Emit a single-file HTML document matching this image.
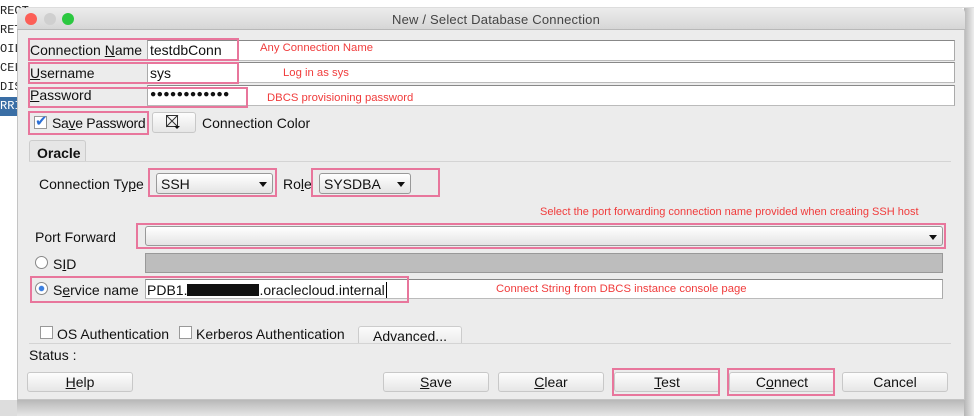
<!DOCTYPE html>
<html><head><meta charset="utf-8"><style>
*{margin:0;padding:0;box-sizing:border-box}
body{width:974px;height:416px;overflow:hidden;background:#fff;font-family:"Liberation Sans","DejaVu Sans",sans-serif;position:relative;font-size:14px;color:#111}
.a{position:absolute}
.pk{position:absolute;border:2px solid #e8769c}
.fld{position:absolute;background:#fff;border-top:1px solid #888;border-bottom:1px solid #bbb;border-left:1px solid #aaa;border-right:1px solid #aaa}
.red{position:absolute;color:#f03c3c;font-size:11.3px}
.btn{position:absolute;height:20px;border:1px solid #c8c8c8;border-radius:3px;background:linear-gradient(#fdfdfd,#e6e6e6);text-align:center;font-size:14px;line-height:19px}
.combo{position:absolute;border:1px solid #999;border-radius:3px;background:linear-gradient(#fff,#e4e4e4);font-size:14px;line-height:20px;padding-left:4px}
.arr{position:absolute;right:5px;top:8px;width:0;height:0;border-left:4px solid transparent;border-right:4px solid transparent;border-top:5px solid #111}
.cb{position:absolute;width:13px;height:13px;border:1px solid #999;background:#fff}
u{text-decoration:underline}
</style></head><body>
<div class="a" style="left:0;top:0;width:974px;height:8px;background:#fff;border-bottom:1px solid #ddd"></div>
<div class="a" style="left:0;top:0;width:17px;height:416px;background:#fff;font-family:'Liberation Mono',monospace;font-size:12px;line-height:19px;color:#222;padding-top:2px">
<div>RECT</div><div>RET</div><div>OILT</div><div>CELI</div><div>DIST</div><div style="background:#3a6ea5;color:#fff">RRIC</div></div>
<div class="a" style="left:17px;top:400px;width:957px;height:16px;background:linear-gradient(#b8b8b8,#e6e6e6)"></div>
<div class="a" style="left:0;top:400px;width:17px;height:16px;background:#ddd"></div>
<div class="a" style="left:964px;top:8px;width:10px;height:408px;background:linear-gradient(90deg,#b5b5b5,#eee)"></div>
<div class="a" style="left:17px;top:8px;width:948px;height:392px;background:#ececec;border-radius:5px 5px 0 0;border:1px solid #c4c4c4"></div>
<div class="a" style="left:17px;top:8px;width:948px;height:22px;background:linear-gradient(#ececec,#d6d6d6);border-radius:5px 5px 0 0;border-bottom:1px solid #b8b8b8"></div>
<div class="a" style="left:25px;top:13px;width:12px;height:12px;border-radius:50%;background:#fc5f57"></div>
<div class="a" style="left:44px;top:13px;width:12px;height:12px;border-radius:50%;background:#cfcfcf"></div>
<div class="a" style="left:62px;top:13px;width:12px;height:12px;border-radius:50%;background:#2bc840"></div>
<div class="a" style="left:392px;top:12px;font-size:13px;color:#444;letter-spacing:0.2px">New / Select Database Connection</div>

<div class="fld" style="left:147px;top:40px;width:808px;height:21px"></div>
<div class="fld" style="left:147px;top:62px;width:808px;height:21px"></div>
<div class="fld" style="left:147px;top:85px;width:808px;height:21px"></div>
<div class="a" style="left:30px;top:42px">Connection <u>N</u>ame</div>
<div class="a" style="left:150px;top:42px">testdbConn</div>
<div class="a" style="left:30px;top:65px"><u>U</u>sername</div>
<div class="a" style="left:150px;top:65px">sys</div>
<div class="a" style="left:30px;top:87px"><u>P</u>assword</div>
<div class="a" style="left:150px;top:88px;font-size:10.5px;letter-spacing:0.3px">●●●●●●●●●●●●</div>
<div class="pk" style="left:28px;top:38px;width:211px;height:23px"></div>
<div class="pk" style="left:28px;top:62px;width:211px;height:22px"></div>
<div class="pk" style="left:28px;top:87px;width:220px;height:21px"></div>
<div class="red" style="left:260px;top:42px">Any Connection Name</div>
<div class="red" style="left:283px;top:67px">Log in as sys</div>
<div class="red" style="left:267px;top:92px">DBCS provisioning password</div>

<div class="cb" style="left:34px;top:116px"></div>
<div class="a" style="left:35px;top:112px;color:#2a6fd6;font-size:15px">✔</div>
<div class="a" style="left:52px;top:115px;letter-spacing:-0.3px">Sa<u>v</u>e Password</div>
<div class="pk" style="left:28px;top:111px;width:121px;height:24px"></div>
<div class="btn" style="left:152px;top:112px;width:44px;height:21px"></div>
<svg class="a" style="left:166px;top:115px" width="16" height="16"><rect x="0.5" y="0.5" width="11" height="11" fill="none" stroke="#333"/><path d="M0 0L12 12M12 0L0 12" stroke="#333" stroke-width="1"/><path d="M8 11h6l-3 3z" fill="#111"/></svg>
<div class="a" style="left:202px;top:115px">Connection Color</div>

<div class="a" style="left:29px;top:140px;width:57px;height:22px;border:1px solid #ccc;border-bottom:none;border-radius:3px 3px 0 0;background:#e6e6e6;font-weight:bold;padding:4px 0 0 7px">Oracle</div>
<div class="a" style="left:29px;top:161px;width:922px;height:183px;border-top:1px solid #d4d4d4;border-bottom:1px solid #d4d4d4;background:#ececec"></div>

<div class="a" style="left:39px;top:176px">Connection Ty<u>p</u>e</div>
<div class="combo" style="left:156px;top:173px;width:117px;height:21px">SSH<div class="arr"></div></div>
<div class="pk" style="left:148px;top:168px;width:129px;height:29px"></div>
<div class="a" style="left:283px;top:176px">Ro<u>l</u>e</div>
<div class="combo" style="left:319px;top:173px;width:92px;height:21px">SYSDBA<div class="arr"></div></div>
<div class="pk" style="left:311px;top:168px;width:129px;height:29px"></div>

<div class="red" style="left:540px;top:206px;font-size:11px">Select the port forwarding connection name provided when creating SSH host</div>
<div class="a" style="left:35px;top:229px">Port Forward</div>
<div class="combo" style="left:145px;top:226px;width:798px;height:20px"><div class="arr"></div></div>
<div class="pk" style="left:136px;top:223px;width:810px;height:26px"></div>

<div class="a" style="left:35px;top:256px;width:13px;height:13px;border-radius:50%;border:1px solid #888;background:#fff"></div>
<div class="a" style="left:53px;top:256px">S<u>I</u>D</div>
<div class="a" style="left:145px;top:253px;width:798px;height:20px;background:#bdbdbd;border:1px solid #999"></div>

<div class="a" style="left:35px;top:282px;width:13px;height:13px;border-radius:50%;border:1px solid #888;background:radial-gradient(#3b7fe0 30%,#fff 40%)"></div>
<div class="a" style="left:53px;top:282px">S<u>e</u>rvice name</div>
<div class="fld" style="left:145px;top:279px;width:798px;height:20px"></div>
<div class="a" style="left:147px;top:282px">PDB1.<span style="display:inline-block;width:72px;height:12px;background:#111;vertical-align:-1px"></span>.oraclecloud.internal<span style="border-left:1px solid #000;margin-left:1px"></span></div>
<div class="pk" style="left:30px;top:276px;width:379px;height:27px"></div>
<div class="red" style="left:496px;top:283px">Connect String from DBCS instance console page</div>

<div class="cb" style="left:40px;top:326px"></div>
<div class="a" style="left:57px;top:326px">OS Authentication</div>
<div class="cb" style="left:179px;top:326px"></div>
<div class="a" style="left:196px;top:326px">Kerberos Authentication</div>
<div class="a" style="left:358px;top:326px;width:104px;height:17px;border:1px solid #ccc;border-bottom:none;border-radius:3px 3px 0 0;background:linear-gradient(#fcfcfc,#ececec);text-align:center;padding-top:1px;overflow:hidden">Advanced...</div>

<div class="a" style="left:29px;top:347px">Status :</div>

<div class="btn" style="left:27px;top:372px;width:106px"><u>H</u>elp</div>
<div class="btn" style="left:383px;top:372px;width:106px"><u>S</u>ave</div>
<div class="btn" style="left:498px;top:372px;width:106px"><u>C</u>lear</div>
<div class="btn" style="left:614px;top:372px;width:106px"><u>T</u>est</div>
<div class="btn" style="left:729px;top:372px;width:106px">C<u>o</u>nnect</div>
<div class="btn" style="left:842px;top:372px;width:106px">Cancel</div>
<div class="pk" style="left:612px;top:368px;width:108px;height:28px"></div>
<div class="pk" style="left:727px;top:368px;width:108px;height:28px"></div>
</body></html>
